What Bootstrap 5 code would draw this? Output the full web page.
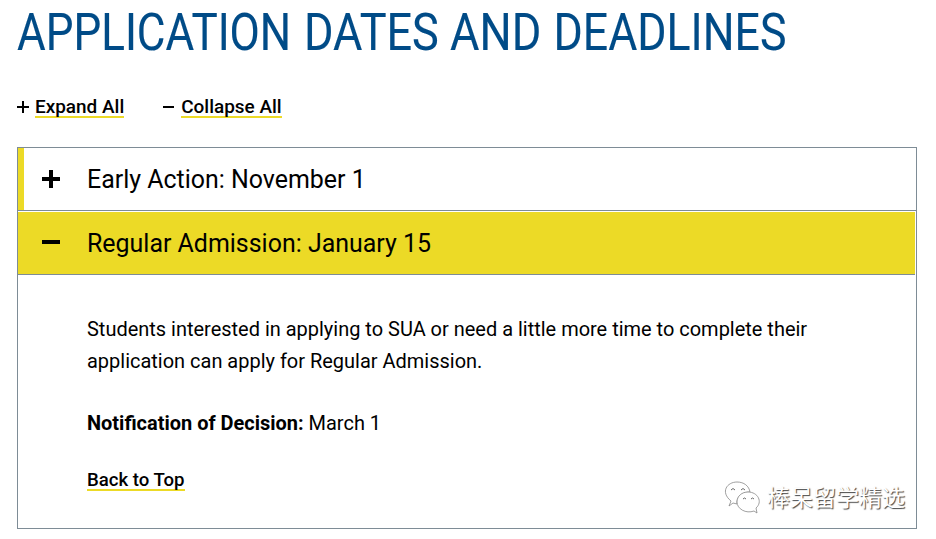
<!DOCTYPE html>
<html lang="en">
<head>
<meta charset="utf-8">
<meta name="viewport" content="width=device-width, initial-scale=1">
<title>Application Dates and Deadlines</title>
<link href="https://cdn.jsdelivr.net/npm/bootstrap@5.3.0/dist/css/bootstrap.min.css" rel="stylesheet">
<style>
body{font-family:Roboto,"Open Sans",sans-serif;color:#000;background:#fff;overflow:hidden}
.page-wrap{padding:0 19px 0 17px}
.page-title{height:93px}
.page-title text{font-family:Roboto,sans-serif;font-size:52.5px;fill:#004b87;stroke:#004b87;stroke-width:.15px;font-weight:400}
.toggle-row{height:54px;padding-top:3px;gap:39px}
.line-link{color:#000;font-weight:500;text-decoration:none;line-height:22px;height:22px;display:inline-block;background:linear-gradient(#ecda26,#ecda26) 0 100%/100% 2.5px no-repeat}
.line-link:hover{color:#000}
.toggle-row .line-link{font-size:18.95px}
.panel-box{border:1px solid #7e8c96;height:382px}
.panel-head{height:63px;border:0;border-bottom:1px solid #7e8c96;background:#fff;font-size:24.95px;line-height:60px;padding-left:24px;gap:27px;color:#000}
.panel-head span{padding-top:2px}
.head-closed{padding-left:24px;background:linear-gradient(#ecda26,#ecda26) 0 0/6px 100% no-repeat #fff}
.head-open{background:#ecda26;margin:1px 1px 0 0}
.panel-text{padding:38px 80px 0 69px;font-size:19.98px;line-height:32px}
.panel-text p{margin-bottom:30px}
.panel-text .line-link{font-size:18.6px}
.watermark{right:31px;bottom:15px;font:23px/35px "Noto Sans CJK SC",sans-serif;color:#fff;text-shadow:1px 1px 1px #444}
</style>
</head>
<body>
<main class="page-wrap position-relative">
  <h1 class="page-title m-0">
    <svg class="d-block" width="800" height="70">
      <text transform="translate(0 50) scale(.838 1)">APPLICATION</text>
      <text transform="translate(287 50) scale(.858 1)">DATES</text>
      <text transform="translate(433 50) scale(.86 1)">AND</text>
      <text transform="translate(536.500 50) scale(.85 1)">DEADLINES</text>
    </svg>
  </h1>
  <div class="toggle-row d-flex align-items-start">
    <div class="d-flex">
      <svg width="18" height="22"><path d="M0 11h12M6 5v12" stroke="#000" stroke-width="2"/></svg>
      <a href="#" class="line-link">Expand All</a>
    </div>
    <div class="d-flex">
      <svg width="18" height="22"><path d="M0 11h11" stroke="#000" stroke-width="2"/></svg>
      <a href="#" class="line-link">Collapse All</a>
    </div>
  </div>
  <section class="panel-box">
    <button type="button" class="panel-head head-closed d-flex align-items-center w-100 text-start py-0">
      <svg width="18" height="18"><path d="M0 9h18M9 0v18" stroke="#000" stroke-width="4"/></svg>
      <span>Early Action: November 1</span>
    </button>
    <div class="panel-head head-open d-flex align-items-center">
      <svg width="18" height="18"><path d="M0 8h18" stroke="#000" stroke-width="4"/></svg>
      <span>Regular Admission: January 15</span>
    </div>
    <div class="panel-text">
      <p>Students interested in applying to SUA or need a little more time to complete their<br>application can apply for Regular Admission.</p>
      <p class="mb-4"><strong>Notification of Decision:</strong> March 1</p>
      <a href="#" class="line-link">Back to Top</a>
    </div>
  </section>
  <div class="watermark position-absolute d-flex align-items-center" lang="zh">
    <svg width="44" height="35" viewBox="0 0 44 35" fill="#fff" stroke="#888" stroke-width=".8">
      <path d="M6 27l2-5C-3 13 4 3 14 3c7 0 12 4 13 10-8 0-14 5-13 12l-4-1z"/>
      <path d="M34 34l-3-2c-8 3-17-2-17-9 0-6 5-10 11-10 10 0 15 10 8 16z"/>
      <path d="M8 11q2-3 4 0M18 11q2-3 4 0M20 20q1.500-2 3 0M28 20q1.500-2 3 0" fill="none" stroke="#444"/>
    </svg>
    <span>棒呆留学精选</span>
  </div>
</main>
<script src="https://cdn.jsdelivr.net/npm/bootstrap@5.3.0/dist/js/bootstrap.bundle.min.js"></script>
</body>
</html>
